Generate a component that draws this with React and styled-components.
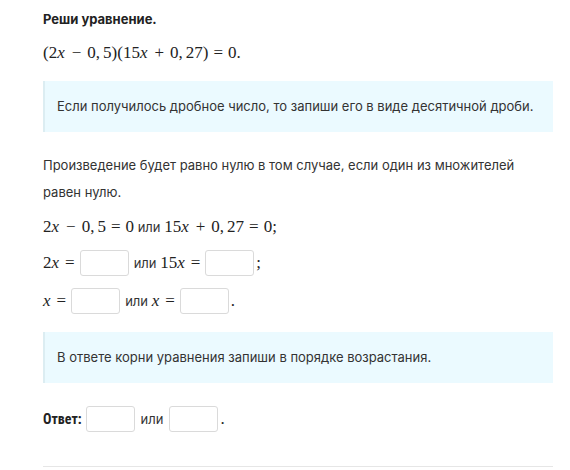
import React from "react";
import styled, { createGlobalStyle } from "styled-components";

const Global = createGlobalStyle`
  html, body { margin: 0; padding: 0; background: #fff; }
  body { font-family: Inter, "Noto Sans", sans-serif; color: #333; }
`;

const Page = styled.div`
  width: 510px;
  padding: 9px 0 0 43px;
  display: flex;
  flex-direction: column;
`;

const Title = styled.div`
  font-weight: 700;
  font-size: 13px;
  line-height: 20px;
  color: #222;
`;

const Math = styled.span`
  font-family: "Liberation Serif", "DejaVu Serif", serif;
  font-size: 17px;
  color: #222;
  white-space: nowrap;
`;

const V = styled.i`
  font-style: italic;
  margin-right: 1px;
`;

const Op = styled.span`
  margin: 0 ${(p) => (p.$rel ? 5 : p.$wide ? 6 : 4)}px;
`;

const Comma = styled.span`
  margin-right: 3px;
`;

const Equation = styled.div`
  margin-top: 11px;
  line-height: 24px;
`;

const Note = styled.div`
  margin-top: ${(p) => p.$mt}px;
  background: #ebfaff;
  border-left: 2px solid #dcedf2;
  padding: 16px 14px 16px 12px;
  font-size: 13px;
  line-height: 19px;
  color: #333;
`;

const Para = styled.p`
  margin: 20px 0 0;
  font-size: 13px;
  line-height: 27px;
  color: #333;
`;

const Row = styled.div`
  display: flex;
  align-items: center;
  height: 36px;
  margin-top: ${(p) => p.$mt || 0}px;
  font-size: 13px;
  color: #333;
  white-space: pre;
`;

const Box = styled.span`
  display: inline-block;
  width: 47px;
  height: 24px;
  border: 1px solid #dadada;
  border-radius: 3px;
  background: #fff;
  margin: 0 ${(p) => p.$mr ?? 3}px 0 ${(p) => p.$ml ?? 0}px;
`;

const Label = styled.span`
  font-family: "Liberation Sans Narrow", "Roboto Condensed", Roboto, sans-serif;
  font-weight: 700;
  font-size: 14px;
  color: #222;
  margin-right: 4px;
`;

const Word = styled.span`
  font-size: 13px;
  color: #333;
`;

const Rule = styled.hr`
  margin: 29px 0 0;
  border: 0;
  border-top: 1px solid #e6e6e6;
`;

export default function App() {
  return (
    <>
      <Global />
      <Page>
        <Title>Реши уравнение.</Title>
        <Equation>
          <Math>
            (2<V>x</V>
            <Op $wide>−</Op>0<Comma>,</Comma>5)(15<V>x</V>
            <Op $wide>+</Op>0<Comma>,</Comma>27)<Op $rel>=</Op>0.
          </Math>
        </Equation>
        <Note $mt={16}>
          Если получилось дробное число, то запиши его в виде десятичной дроби.
        </Note>
        <Para>
          Произведение будет равно нулю в том случае, если один из множителей
          равен нулю.
        </Para>
        <Row $mt={3}>
          <Math>
            2<V>x</V>
            <Op $wide>−</Op>0<Comma>,</Comma>5<Op $rel>=</Op>0
          </Math>
          <Word> или </Word>
          <Math>
            15<V>x</V>
            <Op $wide>+</Op>0<Comma>,</Comma>27<Op $rel>=</Op>0;
          </Math>
        </Row>
        <Row>
          <Math>
            2<V>x</V>
            <Op $rel>=</Op>
          </Math>
          <Box $mr={5} />
          <Word>или </Word>
          <Math>
            15<V>x</V>
            <Op $rel>=</Op>
          </Math>
          <Box $mr={2} />
          <Math>;</Math>
        </Row>
        <Row $mt={2}>
          <Math>
            <V>x</V>
            <Op $rel>=</Op>
          </Math>
          <Box $mr={5} />
          <Word>или </Word>
          <Math>
            <V>x</V>
            <Op $rel>=</Op>
          </Math>
          <Box $mr={2} />
          <Math>.</Math>
        </Row>
        <Note $mt={13}>В ответе корни уравнения запиши в порядке возрастания.</Note>
        <Row $mt={18}>
          <Label>Ответ:</Label>
          <Box $mr={6} />
          <Word>или</Word>
          <Box $ml={6} $mr={2} />
          <Math>.</Math>
        </Row>
        <Rule />
      </Page>
    </>
  );
}
